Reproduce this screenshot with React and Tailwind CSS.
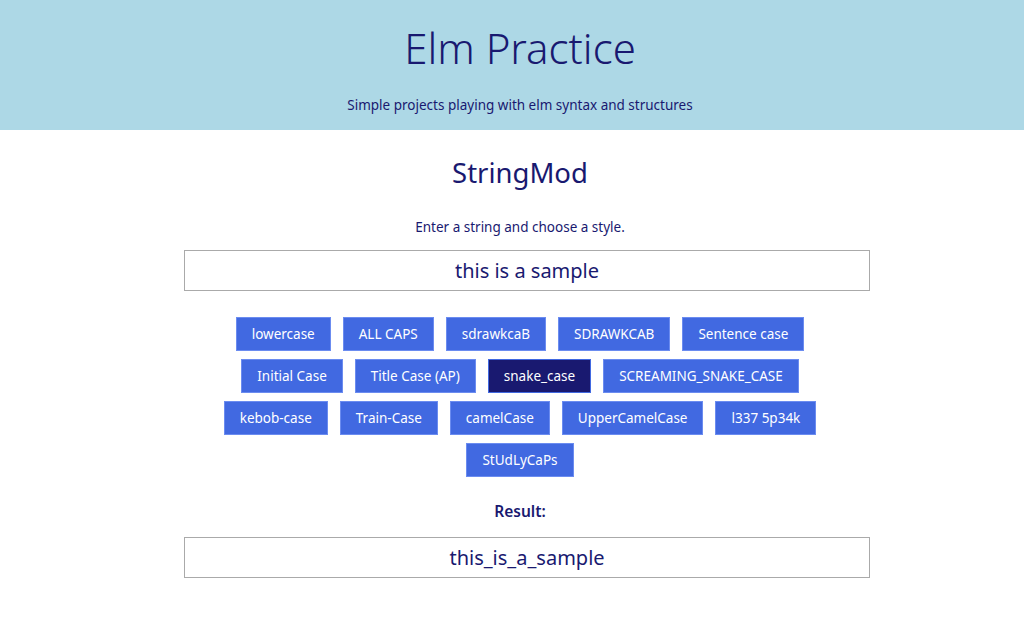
import { useState } from 'react';

const styles = [
    ['lowercase', 'ALL CAPS', 'sdrawkcaB', 'SDRAWKCAB', 'Sentence case'],
    ['Initial Case', 'Title Case (AP)', 'snake_case', 'SCREAMING_SNAKE_CASE'],
    ['kebob-case', 'Train-Case', 'camelCase', 'UpperCamelCase', 'l337 5p34k'],
    ['StUdLyCaPs'],
];

const App = () => {
    const [text, setText] = useState('this is a sample');
    const [active, setActive] = useState('snake_case');

    const result = text.trim().split(/\s+/).join('_').toLowerCase();

    return (
        <div className="min-h-[640px] bg-white text-[#191970]" style={{ fontFamily: '"Noto Sans", "Open Sans", sans-serif' }}>
            <header className="bg-[#add8e6] h-[130px] pl-4 flex flex-col items-center">
                <h1 className="text-[42px] font-light leading-none mt-[27px]">Elm Practice</h1>
                <p className="text-[13.5px] mt-[26px]">Simple projects playing with elm syntax and structures</p>
            </header>

            <main className="pb-10">
                <div className="pl-4 flex flex-col items-center">
                    <h2 className="text-[27.5px] leading-none mt-[29px]">StringMod</h2>
                    <p className="text-[13.5px] mt-[30px]">Enter a string and choose a style.</p>
                </div>

                <input
                    type="text"
                    value={text}
                    onChange={(e) => setText(e.target.value)}
                    className="block w-[686px] h-[41px] ml-[184px] mt-[13px] border border-[#aaaaaa] text-center text-[20px] text-[#191970] outline-none"
                />

                <div className="pl-4 mt-[26px] flex flex-col items-center gap-y-2">
                    {styles.map((row, i) => (
                        <div key={i} className="flex gap-x-3">
                            {row.map(label => (
                                <button
                                    key={label}
                                    onClick={() => setActive(label)}
                                    className={`h-[34px] px-[15px] text-[13.5px] text-white border ${active === label ? 'bg-[#191970] border-[#4169e1]' : 'bg-[#4169e1] border-[#6b8cf0]'}`}
                                >
                                    {label}
                                </button>
                            ))}
                        </div>
                    ))}
                </div>

                <p className="pl-4 text-center text-[15.5px] font-semibold mt-[23px]">Result:</p>

                <div className="w-[686px] h-[41px] ml-[184px] mt-[14px] border border-[#aaaaaa] flex items-center justify-center text-[20px]">
                    {result}
                </div>
            </main>
        </div>
    );
};

export default App;
